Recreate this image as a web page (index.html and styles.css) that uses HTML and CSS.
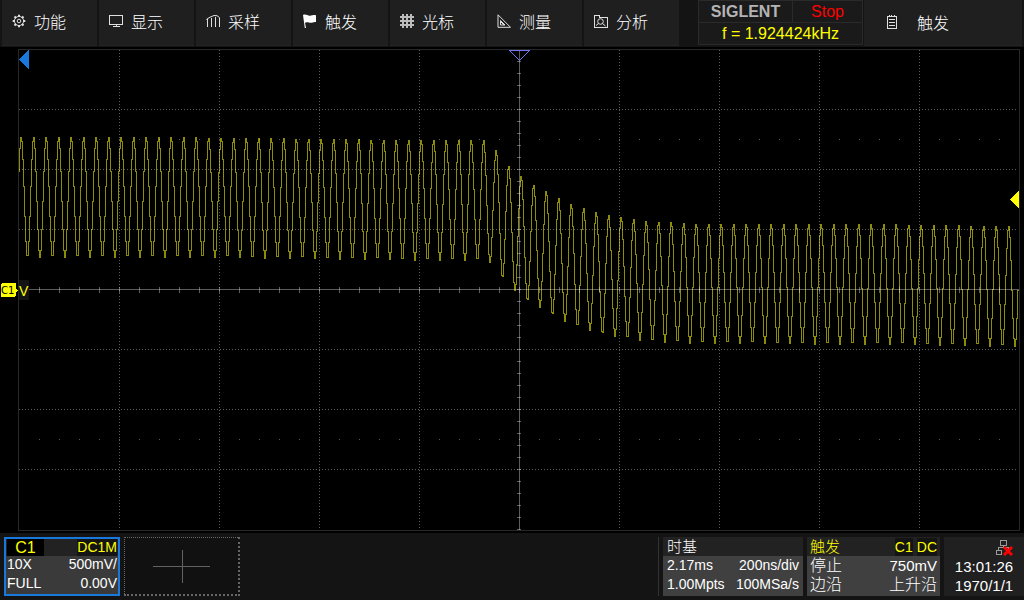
FILE: index.html
```html
<!DOCTYPE html>
<html lang="zh-CN">
<head>
<meta charset="utf-8">
<title>SIGLENT</title>
<link rel="stylesheet" href="styles.css">
</head>
<body>
<header class="topbar">
  <nav class="tabs">
    <button class="tab"><svg class="icon" viewBox="0 0 14 14"><path class="gear" d="M7 .7v2M7 11.300v2M.7 7h2M11.300 7h2M2.500 2.500l1.500 1.500M10 10l1.500 1.500M11.500 2.500 10 4M4 10l-1.500 1.500"/><circle cx="7" cy="7" r="4.600"/><circle cx="7" cy="7" r="1.800"/></svg>功能</button>
    <button class="tab"><svg class="icon" viewBox="0 0 14 14"><path class="crisp" d="M.5 1.500h13v9H.5zM7.500 11v2M4 12.500h7"/></svg>显示</button>
    <button class="tab"><svg class="icon" viewBox="0 0 14 14"><path d="M.3 5.500 4 3.200 8 1.500l3 .2 2.700 2"/><path class="crisp" d="M1.500 5v8M5.500 4v9M9.500 3v10M13.500 4v9"/></svg>采样</button>
    <button class="tab"><svg class="icon" viewBox="0 0 14 14"><path class="solid" d="M0 1C3-.5 5 2.500 8 1.500c2-.8 3-.6 5-.3V8c-3-.5-4 1.500-7 .6C4 8 3 8.200 2 8.800L3 14H1.800z"/></svg>触发</button>
    <button class="tab"><svg class="icon" viewBox="0 0 14 14"><path class="thick" d="M3 0v14M7 0v14M11 0v14M0 3h14M0 7h14M0 11h14"/></svg>光标</button>
    <button class="tab"><svg class="icon" viewBox="0 0 14 14"><path d="M1 .8V13.300H13.500zM3.500 6.500V11H8z"/><path d="M4 8l3 3"/></svg>测量</button>
    <button class="tab"><svg class="icon" viewBox="0 0 14 14"><path class="crisp" d="M.5 13.500V1.500H5l1 2h7.500v10z"/><circle cx="6.500" cy="7.500" r="2.800"/><path d="M8.500 9.500l3 2.500M2 11.500l2.500-2"/></svg>分析</button>
  </nav>
  <section class="status">
    <strong class="brand">SIGLENT</strong>
    <span class="run">Stop</span>
    <span class="freq">f = 1.924424kHz</span>
  </section>
  <button class="tab menu"><svg class="icon" viewBox="0 0 14 14"><path class="crisp" d="M2.500 1.500h9v12h-9zM4 4.500h6M4 7.500h6M4 10.500h6M4.500 0v2M6.500 0v2M9.500 0v2"/></svg>触发</button>
</header>

<main class="scope">
  <svg class="screen" viewBox="0 48 1024 485">
    <path class="wave" id="wave"/>
    <rect class="frame" x="18.5" y="49.500" width="1001" height="481"/>
    <g class="dots">
      <path d="M19 109.500H1018M19 169.500H1018M19 229.500H1018M19 349.500H1018M19 409.500H1018M19 469.500H1018"/>
      <path d="M119.500 50V530M219.500 50V530M319.500 50V530M419.500 50V530M619.500 50V530M719.500 50V530M819.500 50V530M919.500 50V530"/>
    </g>
    <path class="sparse" d="M39 139.500H1018M39 439.500H1018"/>
    <path class="axis" d="M19 289.500H1019M519.500 50V530"/>
    <path class="ticks-x" d="M39 290H1018"/>
    <path class="ticks-y" d="M519 61V530"/>
    <path class="delay" d="M19 59.500 29 50V69z"/>
    <path class="trigger-pos" d="M509.500 50.500h20l-10 10z"/>
    <path class="level" d="M1010 199.500 1019 191V208z"/>
    <rect class="slot" x="19" y="280" width="10" height="20"/>
    <path class="level" d="M3 283H14q2 0 2 2v4l2 1.500-2 1.500v3q0 2-2 2H3q-2 0-2-2V285q0-2 2-2z"/>
    <text class="ch-mark" x="1" y="294">C1</text>
    <text class="v-mark" x="19" y="296">V</text>
  </svg>
</main>

<footer class="bottombar">
  <button class="panel channel">
    <span class="head"><span class="ch-name">C1</span><span class="coupling">DC1M</span></span>
    <span class="row"><span>10X</span><span>500mV/</span></span>
    <span class="row"><span>FULL</span><span>0.00V</span></span>
  </button>
  <button class="add" aria-label="+"><svg class="plus" viewBox="0 0 57 33"><path d="M0 16.500H57M29.500 0V33"/></svg></button>
  <div class="divider"></div>
  <button class="panel timebase">
    <span class="head"><span>时基</span></span>
    <span class="row"><span>2.17ms</span><span>200ns/div</span></span>
    <span class="row"><span>1.00Mpts</span><span>100MSa/s</span></span>
  </button>
  <button class="panel trigger">
    <span class="head"><span>触发</span><span class="tags"><span class="tag">C1</span><span class="tag">DC</span></span></span>
    <span class="row"><span>停止</span><span class="value">750mV</span></span>
    <span class="row"><span>边沿</span><span>上升沿</span></span>
  </button>
  <section class="clock">
    <svg class="net" viewBox="0 0 17 17"><path class="lines" d="M4.500 .5h6v5h-6zM7.500 6v2M2.500 10V7.500h10V10M.5 10.500h5v4h-5z"/><path class="cross" d="M8 7l8 8M16 7l-8 8"/></svg>
    <time>13:01:26</time>
    <time>1970/1/1</time>
  </section>
</footer>
<script src="wave.js"></script>
</body>
</html>
```
FILE: styles.css
```css
* { box-sizing: border-box; }
body {
  margin: 0;
  min-height: 100vh;
  display: flex;
  flex-direction: column;
  background: #000;
  color: #fff;
  font-family: "Liberation Sans", "Noto Sans CJK SC", sans-serif;
  font-size: 16px;
  font-weight: 300;
}
button {
  margin: 0;
  padding: 0;
  border: 0;
  color: inherit;
  font: inherit;
  text-align: left;
}
svg { display: block; fill: none; }

.topbar {
  display: flex;
  align-items: flex-start;
  height: 48px;
  padding: 0 2px;
  background: #141414;
  border-bottom: 1px solid #000;
}
.tabs { display: flex; gap: 2px; flex: none; }
.tab {
  display: flex;
  align-items: center;
  gap: 8px;
  width: 95px;
  height: 46px;
  padding: 0 0 3px 10px;
  background: #1f1f1f;
  border-bottom: 1px solid #242424;
}
.menu { flex: 1; gap: 18px; padding: 0 0 2px 21px; margin-left: 1px; }
.icon { width: 14px; height: 14px; stroke: #e0e0e0; flex: none; }
.crisp { shape-rendering: crispEdges; }
.solid { fill: #fff; stroke: none; }
.thick { stroke: #bbb; stroke-width: 2; }
.gear { stroke-width: 2; }

.status {
  display: grid;
  grid-template-columns: 93px 1fr;
  grid-template-rows: 21px 21px;
  gap: 1px;
  width: 165px;
  margin-left: 19px;
  padding: 1px;
  background: #2a2a2a;
  line-height: 21px;
  text-align: center;
}
.status > * { background: #1a1a1a; }
.brand { color: #b4b4b4; font-weight: 700; }
.run { color: #f00; }
.freq { grid-column: 1 / 3; color: #ff0; }

.scope { flex: 1; }
.screen { width: 100%; shape-rendering: crispEdges; }
.frame { stroke: #282828; }
.dots { stroke: rgba(255, 255, 255, 0.36); stroke-dasharray: 1 2; }
.sparse { stroke: rgba(255, 255, 255, 0.36); stroke-dasharray: 1 19; }
.axis { stroke: rgba(255, 255, 255, 0.36); }
.ticks-x { stroke: rgba(255, 255, 255, 0.36); stroke-width: 6; stroke-dasharray: 1 19; }
.ticks-y { stroke: rgba(255, 255, 255, 0.36); stroke-width: 4; stroke-dasharray: 1 11; }
.wave { stroke: #8c8c08; stroke-linecap: square; }
.delay { fill: #1878dc; }
.trigger-pos { stroke: #7474f0; }
.level { fill: #ff0; }
.slot { fill: #141414; }
.ch-mark { fill: #000; font-family: "DejaVu Sans", sans-serif; font-size: 10px; font-weight: 400; }
.v-mark { fill: #ff0; font-size: 14px; }

.bottombar {
  display: flex;
  gap: 4px;
  padding: 4px 0 4px 4px;
  background: #141414;
  font-size: 14px;
}
.panel {
  display: flex;
  flex-direction: column;
  height: 59px;
  background: #404040;
}
.head, .row {
  display: flex;
  align-items: center;
  justify-content: space-between;
  width: 100%;
  line-height: 19px;
  height: 19px;
  padding: 0 4px;
}
.head { background: #222; }
.channel {
  width: 116px;
  border: 2px solid #1878dc;
  background: #3a3a3a;
}
.channel .row { height: 19px; padding: 0 1px; line-height: 17px; align-items: flex-start; }
.channel .head { height: 17px; padding: 0 1px; color: #ff0; line-height: 17px; }
.ch-name { width: 37px; background: #000; font-size: 16px; text-align: center; }
.coupling { background: #141414; }
.add {
  display: flex;
  align-items: center;
  justify-content: center;
  width: 116px;
  background: #111;
  border: 1px dotted #666;
  border-width: 1px 2px 2px 1px;
}
.plus { width: 57px; height: 33px; stroke: #626262; shape-rendering: crispEdges; }
.divider { width: 1px; margin-left: auto; background: #333; }
.timebase { width: 140px; }
.trigger { width: 133px; font-size: 16px; }
.timebase .head { font-size: 15px; }
.trigger .head { color: #ff0; font-size: 15px; }
.trigger .head, .trigger .row { padding: 0 3px; }
.value { font-size: 15px; }
.tags { display: flex; gap: 4px; font-size: 14px; }
.tag { background: #141414; line-height: 18px; }
.clock {
  display: flex;
  flex-direction: column;
  align-items: center;
  width: 80px;
  padding-top: 3px;
  background: #202020;
  font-size: 15px;
  line-height: 19px;
}
.net { width: 17px; height: 17px; margin-left: 40px; }
.lines { stroke: #999; shape-rendering: crispEdges; }
.cross { stroke: #f00; stroke-width: 3; }
```
FILE: wave.js
```js
// Centre line of the trace as [x, y] pairs, joined linearly.
const centre = [
  [19, 197], [200, 197], [453, 200], [484, 200], [490, 202], [497, 211],
  [503, 218], [509, 226], [516, 231], [528, 241], [547, 251], [559, 258],
  [572, 264], [584, 268], [597, 272], [609, 275], [622, 277], [634, 279],
  [653, 281], [690, 283], [900, 284], [1019, 286]
];
const amplitude = 60;
const period = 12.5;
const firstPeak = 21.25;

function centreAt(x) {
  let i = 1;
  while (i < centre.length - 1 && centre[i][0] < x) i++;
  const [x0, y0] = centre[i - 1];
  const [x1, y1] = centre[i];
  return y0 + (y1 - y0) * (x - x0) / (x1 - x0);
}

let path = "";
for (let x = 19; x < 1019; x++) {
  const phase = (x - firstPeak) * 2 * Math.PI / period;
  const y = Math.round(centreAt(x) - amplitude * Math.cos(phase)) + 0.5;
  path += path ? `V${y}H${x + 0.5}` : `M${x + 0.5} ${y}`;
}
document.getElementById("wave").setAttribute("d", path);
```
